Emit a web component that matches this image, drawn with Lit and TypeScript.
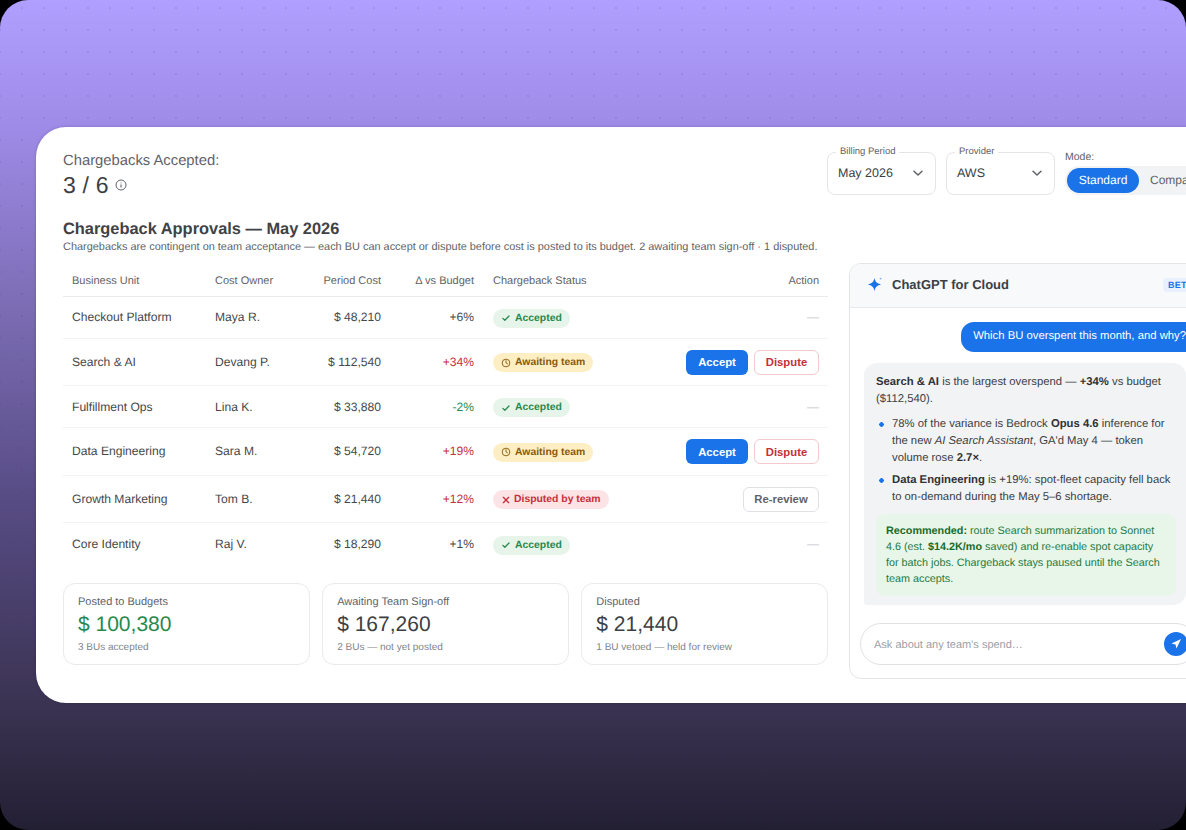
import { LitElement, html, css, svg } from "lit";
import { customElement } from "lit/decorators.js";

type Row = { bu: string; owner: string; cost: string; delta: string; tone: string; status: "ok" | "wait" | "bad"; action: "none" | "both" | "review" };

const rows: Row[] = [
  { bu: "Checkout Platform", owner: "Maya R.", cost: "$ 48,210", delta: "+6%", tone: "", status: "ok", action: "none" },
  { bu: "Search & AI", owner: "Devang P.", cost: "$ 112,540", delta: "+34%", tone: "up", status: "wait", action: "both" },
  { bu: "Fulfillment Ops", owner: "Lina K.", cost: "$ 33,880", delta: "-2%", tone: "down", status: "ok", action: "none" },
  { bu: "Data Engineering", owner: "Sara M.", cost: "$ 54,720", delta: "+19%", tone: "up", status: "wait", action: "both" },
  { bu: "Growth Marketing", owner: "Tom B.", cost: "$ 21,440", delta: "+12%", tone: "up", status: "bad", action: "review" },
  { bu: "Core Identity", owner: "Raj V.", cost: "$ 18,290", delta: "+1%", tone: "", status: "ok", action: "none" },
];

const chevron = html`<svg class="chev" viewBox="0 0 12 12" width="12" height="12"><path d="M2 4.200 6 8l4-3.800" fill="none" stroke="#5f6368" stroke-width="1.500" stroke-linecap="round" stroke-linejoin="round"/></svg>`;

const statusIcon = {
  ok: svg`<path d="M2.200 6.400 4.600 8.700 9.600 3.600" fill="none" stroke="currentColor" stroke-width="1.500" stroke-linecap="round" stroke-linejoin="round"/>`,
  wait: svg`<circle cx="6" cy="6" r="4.600" fill="none" stroke="currentColor" stroke-width="1.100"/><path d="M6 3.200V6l1.800 1" fill="none" stroke="currentColor" stroke-width="1.100" stroke-linecap="round"/>`,
  bad: svg`<path d="M2.800 2.800l6.400 6.400M9.200 2.800l-6.400 6.400" fill="none" stroke="currentColor" stroke-width="1.600" stroke-linecap="round"/>`,
};
const statusText = { ok: "Accepted", wait: "Awaiting team", bad: "Disputed by team" };

@customElement("app-root")
export class AppRoot extends LitElement {
  static styles = css`
    :host { display: block; width: 1186px; height: 830px; background: #000; overflow: hidden; font-family: "Liberation Sans", Arial, sans-serif; color: #3c4043; text-rendering: geometricPrecision; }
    * { box-sizing: border-box; }
    .frame {
      width: 1186px; height: 830px; border-radius: 28px; overflow: hidden; padding: 127px 0 0 36px;
      background:
        radial-gradient(circle at center, rgba(60,40,120,.11) 0 1px, transparent 1.400px) 11px -3px / 22px 22px,
        linear-gradient(180deg, #b19fff 0%, #a08dea 14%, #7a6bb2 38%, #584c85 60%, #3b3352 85%, #231f33 100%);
    }
    .card { width: 1200px; height: 576px; background: #fff; border-radius: 30px 0 0 30px; padding: 24px 0 0 27px; box-shadow: 0 0 3px rgba(30,20,60,.25); }
    .head { display: flex; justify-content: space-between; align-items: flex-start; width: 1148px; height: 62px; }
    .kpi-l { font-size: 14.800px; line-height: 18px; padding-top: 1px; color: #5f6368; }
    .kpi-v { display: flex; align-items: center; gap: 6px; font-size: 23px; line-height: 28px; margin-top: 1px; color: #3c4043; letter-spacing: .2px; }
    .controls { display: flex; gap: 10px; align-items: flex-start; }
    .select { position: relative; width: 109px; height: 43px; margin-top: 1px; border: 1px solid #e3e5e8; border-radius: 8px; display: flex; align-items: center; justify-content: space-between; padding: 0 11px 2px 10px; font-size: 12.500px; color: #3c4043; }
    .select .lab { position: absolute; top: -7px; left: 8px; background: #fff; padding: 0 4px; font-size: 9.500px; line-height: 11px; color: #5f6368; }
    .mode { font-size: 10.500px; color: #5f6368; line-height: 13px; margin-top: -1px; }
    .mode .lab { display: block; padding: 1px 0 0; margin: 0 0 3px; line-height: 12px; }
    .toggle { display: flex; padding: 2px; background: #f1f3f4; border-radius: 15px; width: 146px; font-size: 12px; }
    .toggle span { flex: none; height: 25px; line-height: 25px; padding: 0 11px; border-radius: 13px; color: #5f6368; white-space: nowrap; }
    .toggle .on { background: #1a73e8; color: #fff; width: 72px; padding: 0; text-align: center; }
    h2 { margin: 6px 0 0; font-size: 16.400px; line-height: 20px; font-weight: 700; color: #3f4246; }
    .sub { font-size: 10.930px; line-height: 14px; margin-top: 1px; color: #5f6368; }
    .main { display: flex; gap: 21px; align-items: flex-start; margin-top: 9px; }
    .left { width: 765px; flex: none; }
    table { width: 765px; border-collapse: collapse; table-layout: fixed; font-size: 12.100px; }
    th { font-size: 11px; font-weight: 400; color: #5f6368; text-align: left; padding: 3px 9px 0; height: 33px; border-bottom: 1px solid #e8eaed; }
    td { padding: 0 9px; border-bottom: 1px solid #f1f3f4; color: #45484c; }
    th.st, td.st { padding-left: 10px; }
    tr.short td { height: 42px; }
    tr.tall td { height: 47.600px; }
    tr:last-child td { border-bottom: 0; }
    .r { text-align: right; }
    td.up { color: #c62f3b; }
    td.down { color: #2a8c4f; }
    .badge { display: inline-flex; align-items: center; gap: 4px; height: 19px; margin-top: 2px; padding: 0 8px; border-radius: 10px; font-size: 10.400px; font-weight: 700; vertical-align: middle; }
    .badge.ok { background: #e6f4ea; color: #26894b; }
    .badge.wait { background: #fdefc3; color: #8a5a0b; }
    .badge.bad { background: #fce4e6; color: #c62f3b; gap: 3px; }
    .acts { display: flex; justify-content: flex-end; gap: 6px; margin-top: 1px; }
    button { font: inherit; height: 25px; border-radius: 6px; font-size: 11.300px; font-weight: 700; padding: 0; background: #fff; }
    .accept { width: 62px; background: #1a73e8; border: 0; color: #fff; }
    .dispute { width: 65px; border: 1px solid #f3c9cd; color: #c62f3b; }
    .review { width: 76px; border: 1px solid #dfe1e5; color: #5f6368; }
    td .dash { color: #c4c7cc; }
    .stats { display: flex; gap: 12.500px; margin-top: 18px; }
    .stat { flex: 1; height: 82px; border: 1px solid #e8eaed; border-radius: 12px; padding: 12px 14px 0; }
    .stat .l { font-size: 11px; line-height: 13px; color: #5f6368; }
    .stat .v { font-size: 21px; line-height: 26px; margin-top: 3px; color: #3c4043; }
    .stat .v.g { color: #26894b; }
    .stat .s { font-size: 10px; line-height: 13px; margin-top: 3px; color: #80868b; }
    .chat { width: 360px; height: 416px; flex: none; border: 1px solid #e3e5e8; border-radius: 12px; overflow: hidden; }
    .chat-h { height: 44px; background: #f8f9fb; border-bottom: 1px solid #e8eaed; display: flex; align-items: center; padding: 0 10px 2px 16px; gap: 8px; font-size: 13px; font-weight: 700; }
    .chat-h b { flex: 1; }
    .beta { font-size: 9px; font-weight: 700; color: #1a73e8; background: #e8f0fe; border-radius: 4px; padding: 2px 5px; letter-spacing: .3px; }
    .msgs { display: flex; flex-direction: column; padding: 14px 10px 0 14px; height: 315px; gap: 11px; font-size: 11.300px; line-height: 17px; }
    .user { align-self: flex-end; height: 30px; line-height: 29px; padding: 0 12px; background: #1a73e8; color: #fff; border-radius: 13px 13px 4px 13px; font-size: 11.300px; white-space: nowrap; }
    .bot { width: 322px; background: #f1f3f4; border-radius: 13px 13px 13px 3px; padding: 11px 10px 9px 12px; }
    .bot p { margin: 0; }
    .bot b { color: #2f3235; }
    ul { margin: 8px 0 8px; padding: 0; list-style: none; }
    li { margin-bottom: 5px; padding-left: 16px; background: radial-gradient(circle at 5.500px 8.500px, #1a73e8 2px, transparent 2.500px) no-repeat; }
    li:last-child { margin-bottom: 0; }
    .rec { background: #e8f5e9; color: #1f7a3d; border-radius: 9px; padding: 9px 10px; font-size: 10.800px; line-height: 16px; }
    .rec b { color: #176c2c; }
    .ask { height: 42px; margin: 0 11px 0 10px; border: 1px solid #dfe1e5; border-radius: 21px; display: flex; align-items: center; justify-content: space-between; padding: 0 8px 0 13px; font-size: 11px; color: #9aa0a6; }
    .ask span { margin-top: 2px; }
    .send { width: 24px; height: 24px; border-radius: 50%; background: #1a73e8; display: flex; align-items: center; justify-content: center; }
  `;

  private renderRow(r: Row) {
    return html`<tr class=${r.action === "none" ? "short" : "tall"}>
      <td>${r.bu}</td>
      <td>${r.owner}</td>
      <td class="r">${r.cost}</td>
      <td class="r ${r.tone}">${r.delta}</td>
      <td class="st"><span class="badge ${r.status}"><svg viewBox="0 0 12 12" width="10" height="10">${statusIcon[r.status]}</svg>${statusText[r.status]}</span></td>
      <td>
        ${r.action === "none" ? html`<div class="r dash">—</div>` : r.action === "both"
          ? html`<div class="acts"><button class="accept">Accept</button><button class="dispute">Dispute</button></div>`
          : html`<div class="acts"><button class="review">Re-review</button></div>`}
      </td>
    </tr>`;
  }

  render() {
    return html`<div class="frame"><div class="card">
      <div class="head">
        <div>
          <div class="kpi-l">Chargebacks Accepted:</div>
          <div class="kpi-v">3 / 6
            <svg viewBox="0 0 12 12" width="12" height="12"><circle cx="6" cy="6" r="5" fill="none" stroke="#5f6368" stroke-width="1"/><path d="M6 5.400V8.600M6 3.400v.9" stroke="#5f6368" stroke-width="1.100"/></svg>
          </div>
        </div>
        <div class="controls">
          <div class="select"><span class="lab">Billing Period</span>May 2026 ${chevron}</div>
          <div class="select"><span class="lab">Provider</span>AWS ${chevron}</div>
          <div class="mode"><span class="lab">Mode:</span>
            <div class="toggle"><span class="on">Standard</span><span>Compare</span></div>
          </div>
        </div>
      </div>
      <h2>Chargeback Approvals — May 2026</h2>
      <div class="sub">Chargebacks are contingent on team acceptance — each BU can accept or dispute before cost is posted to its budget. 2 awaiting team sign-off · 1 disputed.</div>
      <div class="main">
        <div class="left">
          <table>
            <colgroup><col style="width:143px"/><col style="width:94px"/><col style="width:90px"/><col style="width:93px"/><col style="width:166px"/><col style="width:179px"/></colgroup>
            <thead><tr><th>Business Unit</th><th>Cost Owner</th><th class="r">Period Cost</th><th class="r">Δ vs Budget</th><th class="st">Chargeback Status</th><th class="r">Action</th></tr></thead>
            <tbody>${rows.map((r) => this.renderRow(r))}</tbody>
          </table>
          <div class="stats">
            <div class="stat"><div class="l">Posted to Budgets</div><div class="v g">$ 100,380</div><div class="s">3 BUs accepted</div></div>
            <div class="stat"><div class="l">Awaiting Team Sign-off</div><div class="v">$ 167,260</div><div class="s">2 BUs — not yet posted</div></div>
            <div class="stat"><div class="l">Disputed</div><div class="v">$ 21,440</div><div class="s">1 BU vetoed — held for review</div></div>
          </div>
        </div>
        <div class="chat">
          <div class="chat-h">
            <svg viewBox="0 0 18 18" width="18" height="18"><path d="M8.500 1.800c.7 4 2.400 5.800 6.600 6.700-4.200.9-5.900 2.700-6.600 6.700-.7-4-2.400-5.800-6.600-6.700 4.200-.9 5.900-2.700 6.600-6.700z" fill="#1a73e8"/><path d="M14.600 1.300c.12.9.5 1.280 1.400 1.400-.9.12-1.280.5-1.400 1.400-.12-.9-.5-1.280-1.400-1.400.9-.12 1.280-.5 1.400-1.400z" fill="#7aaaf0"/></svg>
            <b>ChatGPT for Cloud</b><span class="beta">BETA</span>
          </div>
          <div class="msgs">
            <div class="user">Which BU overspent this month, and why?</div>
            <div class="bot">
              <p><b>Search &amp; AI</b> is the largest overspend — <b>+34%</b> vs budget ($112,540).</p>
              <ul>
                <li>78% of the variance is Bedrock <b>Opus 4.6</b> inference for the new <i>AI Search Assistant</i>, GA'd May 4 — token volume rose <b>2.7×</b>.</li>
                <li><b>Data Engineering</b> is +19%: spot-fleet capacity fell back to on-demand during the May 5–6 shortage.</li>
              </ul>
              <div class="rec"><b>Recommended:</b> route Search summarization to Sonnet 4.6 (est. <b>$14.2K/mo</b> saved) and re-enable spot capacity for batch jobs. Chargeback stays paused until the Search team accepts.</div>
            </div>
          </div>
          <div class="ask"><span>Ask about any team's spend…</span>
            <div class="send"><svg viewBox="0 0 24 24" width="12" height="12"><polygon points="3 11 22 2 13 21 11 13 3 11" fill="#fff"/></svg></div>
          </div>
        </div>
      </div>
    </div></div>`;
  }
}
